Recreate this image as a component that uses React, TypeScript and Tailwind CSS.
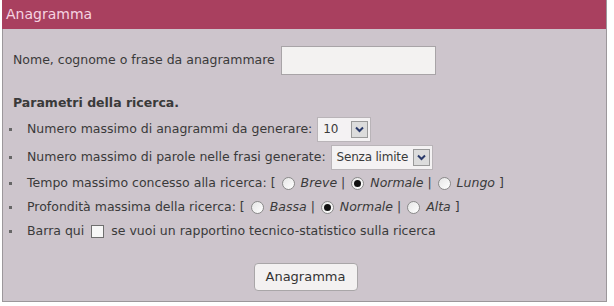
import React from 'react';

function Radio({ checked }: { checked?: boolean }) {
  return (
    <span className="inline-flex shrink-0 items-center justify-center w-[13px] h-[13px] rounded-full border border-[#8a8a8a] bg-gradient-to-br from-[#e6e6e6] to-white ml-[6px] mr-[6px]">
      {checked && <span className="w-[7px] h-[7px] rounded-full bg-[#111]" />}
    </span>
  );
}

function Select({ value, width }: { value: string; width: string }) {
  return (
    <span className={`inline-flex shrink-0 whitespace-nowrap items-center justify-between h-[25px] border border-[#b9b4b8] bg-[#f4f2f3] pl-[5px] pr-[2px] text-[12px] tracking-[-0.2px] ${width}`}>
      <span>{value}</span>
      <span className="w-[17px] h-[17px] ml-[3px] shrink-0 border border-[#9a9a9a] bg-[#dcdcdc] flex items-center justify-center">
        <svg width="9" height="7" viewBox="0 0 9 7">
          <path d="M1 1.5 L4.5 5 L8 1.5" stroke="#2a3a6a" strokeWidth="2" fill="none" />
        </svg>
      </span>
    </span>
  );
}

function Row({ children, h = 'h-[24px]' }: { children: React.ReactNode; h?: string }) {
  return (
    <li className={`flex items-center whitespace-nowrap ${h}`}>
      <span className="w-[3px] h-[3px] bg-[#666] ml-[2px] mr-[15px]" />
      {children}
    </li>
  );
}

export default function App() {
  return (
    <div className="min-h-screen bg-white pt-0 pl-[2px]" style={{ fontFamily: '"DejaVu Sans", Verdana, sans-serif' }}>
      <div className="w-[605px] h-[302px] flex flex-col border-l border-r border-b border-[#9c979b] bg-[#cdc5cc] text-[12.5px] text-[#3a3a3a]">
        <div className="h-[29px] bg-[#a9405f] text-[#f6d3e1] text-[14px] flex items-center pl-[4px] -ml-px">
          Anagramma
        </div>
        <div className="pl-[10px] pt-[17px]">
          <div className="flex items-center h-[29px]">
            <span>Nome, cognome o frase da anagrammare</span>
            <span className="ml-[6px] w-[155px] h-[29px] border border-[#a8a4a7] bg-[#f3f2f1]" />
          </div>
          <div className="font-bold mt-[20px] h-[16px] leading-[16px]">Parametri della ricerca.</div>
          <ul className="-ml-[6px] mt-[4px]">
            <Row h="h-[28px]">
              Numero massimo di anagrammi da generare:
              <span className="ml-[5px]"><Select value="10" width="w-[54px]" /></span>
            </Row>
            <Row h="h-[28px]">
              Numero massimo di parole nelle frasi generate:
              <span className="ml-[5px]"><Select value="Senza limite" width="w-[102px]" /></span>
            </Row>
            <Row>
              Tempo massimo concesso alla ricerca: [<Radio /><i>Breve</i>&nbsp;|<Radio checked /><i>Normale</i>&nbsp;|<Radio /><i>Lungo</i>&nbsp;]
            </Row>
            <Row>
              Profondità massima della ricerca: [<Radio /><i>Bassa</i>&nbsp;|<Radio checked /><i>Normale</i>&nbsp;|<Radio /><i>Alta</i>&nbsp;]
            </Row>
            <Row>
              Barra qui
              <span className="inline-block shrink-0 w-[13px] h-[13px] border border-[#6f6f6f] bg-[#f7f7f7] mx-[7px]" />
              se vuoi un rapportino tecnico-statistico sulla ricerca
            </Row>
          </ul>
          <div className="flex justify-center mt-[20px] pr-[10px]">
            <button className="w-[104px] h-[28px] rounded-[4px] border border-[#a9a6a8] bg-[#f3f1f1] text-[13px] text-[#333] ml-[2px]">
              Anagramma
            </button>
          </div>
        </div>
      </div>
    </div>
  );
}
